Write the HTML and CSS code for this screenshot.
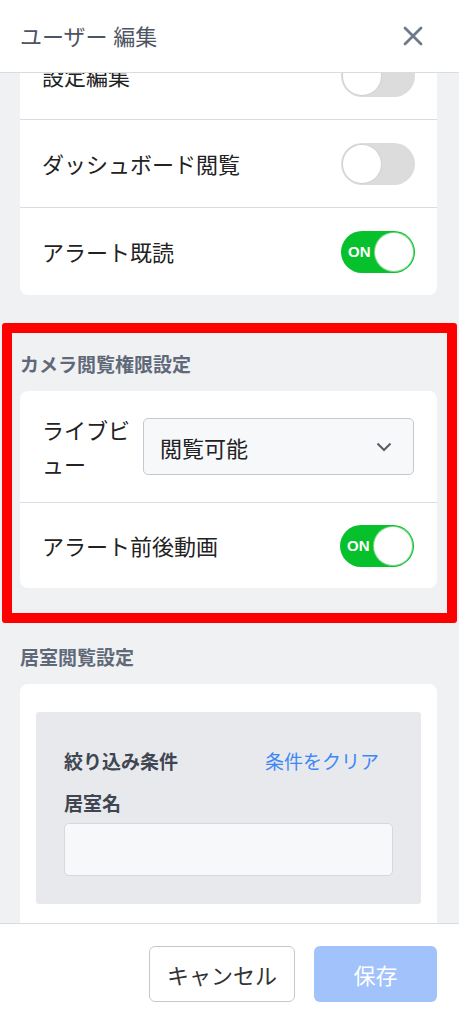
FILE: index.html
```html
<html>
<head>
<meta charset="utf-8">
<meta name="viewport" content="width=device-width, initial-scale=1.0">
<title>ユーザー 編集</title>
<link rel="stylesheet" href="styles.css">
</head>
<body>
<div class="modal">
  <header class="modal-header">
    <h1 class="modal-title">ユーザー 編集</h1>
    <button class="close-button" type="button" aria-label="閉じる">
      <svg width="20" height="20" viewBox="0 0 20 20">
        <path d="M2 2L18 18M18 2L2 18" stroke="#6e7a8c" stroke-width="2.8" stroke-linecap="round" fill="none"/>
      </svg>
    </button>
  </header>
  <div id="modalBody" class="modal-body">
    <section class="section">
      <h2 class="section-title">機能権限設定</h2>
      <div class="card">
        <div class="row">
          <span class="row-label">ユーザー管理</span>
          <span class="toggle"><span class="knob"></span></span>
        </div>
        <div class="row" id="rowSettings">
          <span class="row-label">設定編集</span>
          <span class="toggle"><span class="knob"></span></span>
        </div>
        <div class="row">
          <span class="row-label">ダッシュボード閲覧</span>
          <span class="toggle"><span class="knob"></span></span>
        </div>
        <div class="row">
          <span class="row-label">アラート既読</span>
          <span class="toggle on"><span class="toggle-text">ON</span><span class="knob"></span></span>
        </div>
      </div>
    </section>

    <section class="section highlight">
      <h2 class="section-title">カメラ閲覧権限設定</h2>
      <div class="card">
        <div class="row row-tight">
          <span class="row-label row-label-narrow">ライブビュー</span>
          <div class="select">
            <span>閲覧可能</span>
            <svg width="16" height="10" viewBox="0 0 16 10">
              <path d="M1.5 1.5L8 8L14.5 1.5" stroke="#565e6c" stroke-width="2" fill="none"/>
            </svg>
          </div>
        </div>
        <div class="row row-tight">
          <span class="row-label">アラート前後動画</span>
          <span class="toggle on"><span class="toggle-text">ON</span><span class="knob"></span></span>
        </div>
      </div>
    </section>

    <section class="section">
      <h2 class="section-title">居室閲覧設定</h2>
      <div class="card card-padded">
        <div class="filter-box">
          <div class="filter-head">
            <span class="filter-title">絞り込み条件</span>
            <a class="filter-clear" href="#">条件をクリア</a>
          </div>
          <label class="filter-label">居室名</label>
          <input class="filter-input" type="text">
        </div>
        <div class="room-list">
          <div class="room">101号室</div>
          <div class="room">102号室</div>
          <div class="room">103号室</div>
        </div>
      </div>
    </section>
  </div>
  <footer class="modal-footer">
    <button class="btn btn-cancel" type="button">キャンセル</button>
    <button class="btn btn-save" type="button">保存</button>
  </footer>
</div>
<script>
var body = document.getElementById('modalBody');
var row = document.getElementById('rowSettings');
body.scrollTop = row.getBoundingClientRect().top - 31;
</script>
</body>
</html>
```

FILE: styles.css
```css
html {
  box-sizing: border-box;
}
*, *::before, *::after {
  box-sizing: inherit;
}
body {
  margin: 0;
  font-family: "Noto Sans", "Noto Sans CJK JP", sans-serif;
  color: #222;
  background: #fff;
}
.modal {
  display: flex;
  flex-direction: column;
  height: 100vh;
}
.modal-header {
  flex: none;
  height: 73px;
  display: flex;
  align-items: center;
  justify-content: space-between;
  padding: 0 36px 0 20px;
  background: #fff;
  border-bottom: 1px solid #d9dde3;
  position: relative;
  z-index: 2;
}
.modal-title {
  margin: 0;
  font-size: 22px;
  font-weight: normal;
  color: #4d5563;
  line-height: 1;
}
.close-button {
  border: none;
  background: none;
  padding: 0;
  display: flex;
}
.modal-body {
  flex: 1;
  overflow: hidden;
  background: #f0f1f3;
  padding: 24px 22px 40px 20px;
}
.section + .section {
  margin-top: 57px;
}
.section-title {
  margin: 0 0 13px;
  font-size: 19px;
  line-height: 26px;
  font-weight: bold;
  color: #5f6978;
}
.card {
  background: #fff;
  border-radius: 8px;
}
.row {
  display: flex;
  align-items: center;
  justify-content: space-between;
  padding: 22.5px 22px;
}
.row + .row {
  border-top: 1px solid #d8dde3;
}
.row-tight {
  padding: 21.5px 23px 21.5px 22px;
}
.row-label {
  font-size: 22px;
  line-height: 34px;
}
.row-label-narrow {
  width: 90px;
  flex: none;
}
.toggle {
  display: flex;
  align-items: center;
  width: 74px;
  height: 42px;
  padding: 2px;
  border-radius: 21px;
  background: #dcdcdc;
}
.knob {
  width: 38px;
  height: 38px;
  border-radius: 50%;
  background: #fff;
  box-shadow: 0 0 0 1px #d2d2d2;
}
.toggle.on {
  background: #06c12c;
  justify-content: space-between;
}
.toggle.on .knob {
  box-shadow: 0 0 0 1px #7fd98e;
}
.toggle-text {
  margin-left: 5px;
  color: #fff;
  font-family: "Liberation Sans", sans-serif;
  font-weight: bold;
  font-size: 15px;
}
.select {
  flex: 1;
  margin-left: 11px;
  height: 57px;
  display: flex;
  align-items: center;
  justify-content: space-between;
  padding: 0 21px 0 16px;
  background: #f7f8fa;
  border: 1px solid #c3c9d3;
  border-radius: 5px;
  font-size: 22px;
}
.highlight {
  position: relative;
}
.highlight::after {
  content: '';
  position: absolute;
  top: -29px;
  left: -18px;
  right: -20px;
  bottom: -35px;
  border: 10px solid #ff0000;
  border-radius: 3px;
  pointer-events: none;
}
.card-padded {
  padding: 28px 16px;
}
.filter-box {
  background: #e8e9ec;
  border-radius: 3px;
  padding: 36px 28px 28px;
}
.filter-head {
  display: flex;
  justify-content: space-between;
  align-items: center;
  line-height: 28px;
  margin-bottom: 14px;
}
.filter-title {
  font-size: 19px;
  font-weight: bold;
  color: #3f4652;
}
.filter-clear {
  margin-right: 14px;
  font-size: 19px;
  color: #3f87f5;
  text-decoration: none;
}
.filter-label {
  display: block;
  font-size: 19px;
  line-height: 28px;
  font-weight: bold;
  color: #3f4652;
  margin-bottom: 5px;
}
.filter-input {
  display: block;
  width: 100%;
  height: 53px;
  background: #f7f8fa;
  border: 1px solid #d5d8dd;
  border-radius: 5px;
}
.room-list {
  padding-top: 20px;
}
.room {
  font-size: 20px;
  line-height: 60px;
  border-bottom: 1px solid #e3e6ea;
}
.modal-footer {
  flex: none;
  height: 101px;
  display: flex;
  justify-content: flex-end;
  gap: 19px;
  padding: 22px 22px 0;
  background: #fff;
  border-top: 1px solid #d9dde3;
}
.btn {
  height: 56px;
  border-radius: 6px;
  font-family: inherit;
  font-size: 22px;
}
.btn-cancel {
  width: 146px;
  background: #fff;
  color: #333;
  border: 1.5px solid #c4c9d1;
}
.btn-save {
  width: 123px;
  background: #a1c2fa;
  color: #fff;
  border: none;
}
```
